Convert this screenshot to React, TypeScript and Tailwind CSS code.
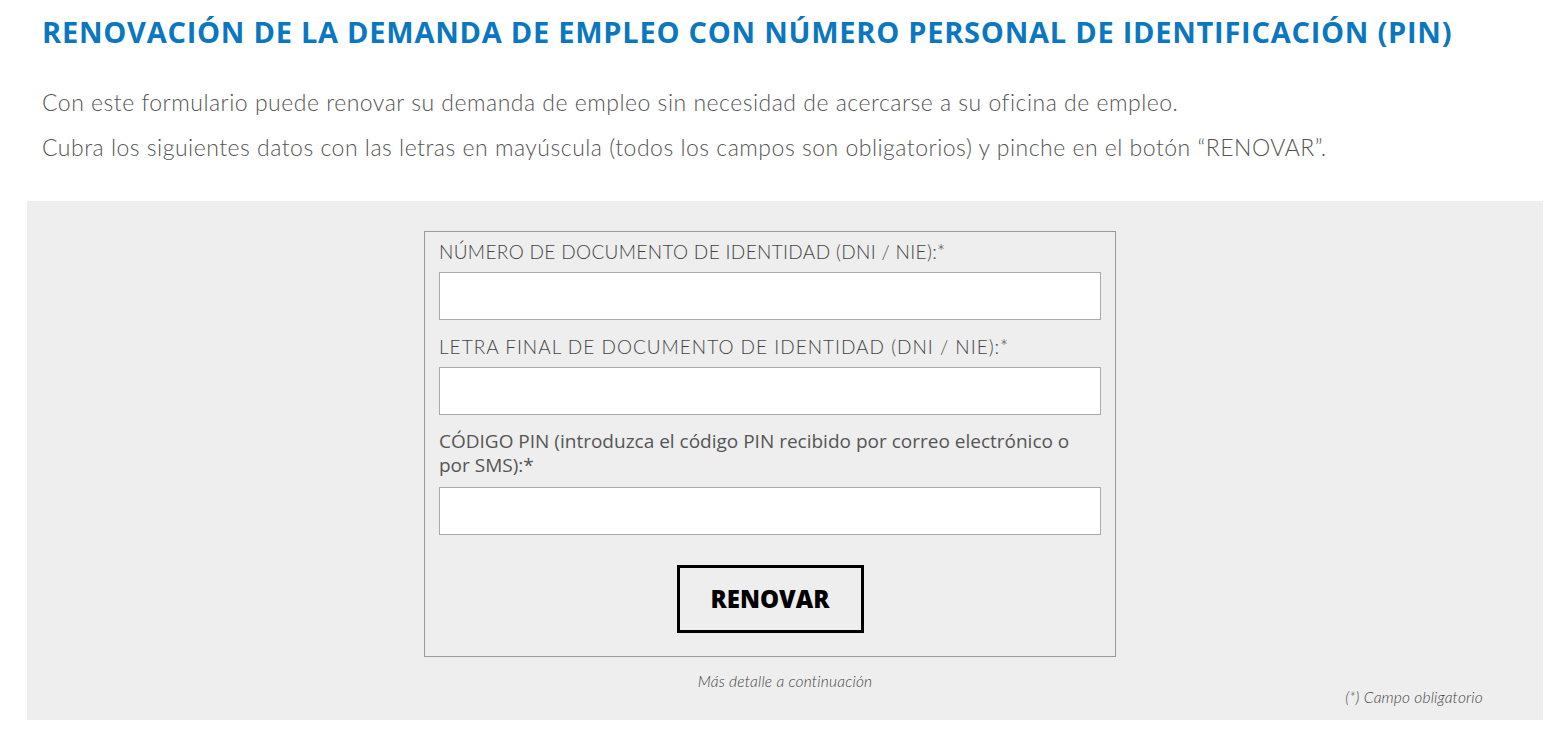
import React from 'react';

const labelFont = { fontFamily: 'Lato, "Open Sans", sans-serif' };

const App: React.FC = () => {
  return (
    <div className="w-[1568px] h-[733px] bg-white overflow-hidden" style={labelFont}>
      <div className="pl-[42px] pt-[13px]">
        <h1 className="text-[29px] leading-[38px] font-bold text-[#0a77c0] tracking-[0.75px]" style={{ fontFamily: '"Open Sans", sans-serif' }}>
          RENOVACIÓN DE LA DEMANDA DE EMPLEO CON NÚMERO PERSONAL DE IDENTIFICACIÓN (PIN)
        </h1>
        <p className="mt-[29px] text-[23px] leading-[45px] text-[#555] font-light tracking-[0.5px]">
          Con este formulario puede renovar su demanda de empleo sin necesidad de acercarse a su oficina de empleo.
        </p>
        <p className="text-[23px] leading-[45px] text-[#555] font-light tracking-[0.5px]">
          Cubra los siguientes datos con las letras en mayúscula (todos los campos son obligatorios) y pinche en el botón “RENOVAR”.
        </p>
      </div>

      <div className="ml-[27px] mt-[31px] w-[1516px] h-[519px] bg-[#eeeeee] pt-[30px] flex flex-col">
        <div className="ml-[397px] w-[692px] h-[426px] border border-[#999] px-[14px] pt-[6px]">
          <label className="block text-[19px] leading-[28px] text-[#444] font-light tracking-[0.35px]">
            NÚMERO DE DOCUMENTO DE IDENTIDAD (DNI / NIE):*
          </label>
          <input className="mt-[6px] block w-full h-[48px] bg-white border border-[#aaa]" />
          <label className="block mt-[13px] text-[19px] leading-[28px] text-[#444] font-light tracking-[1px]">
            LETRA FINAL DE DOCUMENTO DE IDENTIDAD (DNI / NIE):*
          </label>
          <input className="mt-[6px] block w-full h-[48px] bg-white border border-[#aaa]" />
          <label
            className="block mt-[14px] text-[19px] leading-[24px] text-[#555]"
            style={{ fontFamily: '"Open Sans", sans-serif' }}
          >
            CÓDIGO PIN (introduzca el código PIN recibido por correo electrónico o por SMS):*
          </label>
          <input className="mt-[10px] block w-full h-[48px] bg-white border border-[#aaa]" />
          <div className="flex justify-center mt-[30px]">
            <button
              className="w-[187px] h-[68px] border-[3px] border-black bg-transparent text-[24px] font-extrabold text-black"
              style={{ fontFamily: '"Open Sans", sans-serif' }}
            >
              RENOVAR
            </button>
          </div>
        </div>
        <p className="mt-[15px] text-center text-[15.5px] leading-[18px] italic text-[#444] font-light tracking-[0.2px]">
          Más detalle a continuación
        </p>
        <p className="mt-[-2px] pr-[60px] text-right text-[15.5px] leading-[18px] italic text-[#444] font-light tracking-[0.2px]">
          (*) Campo obligatorio
        </p>
      </div>
    </div>
  );
};

export default App;
